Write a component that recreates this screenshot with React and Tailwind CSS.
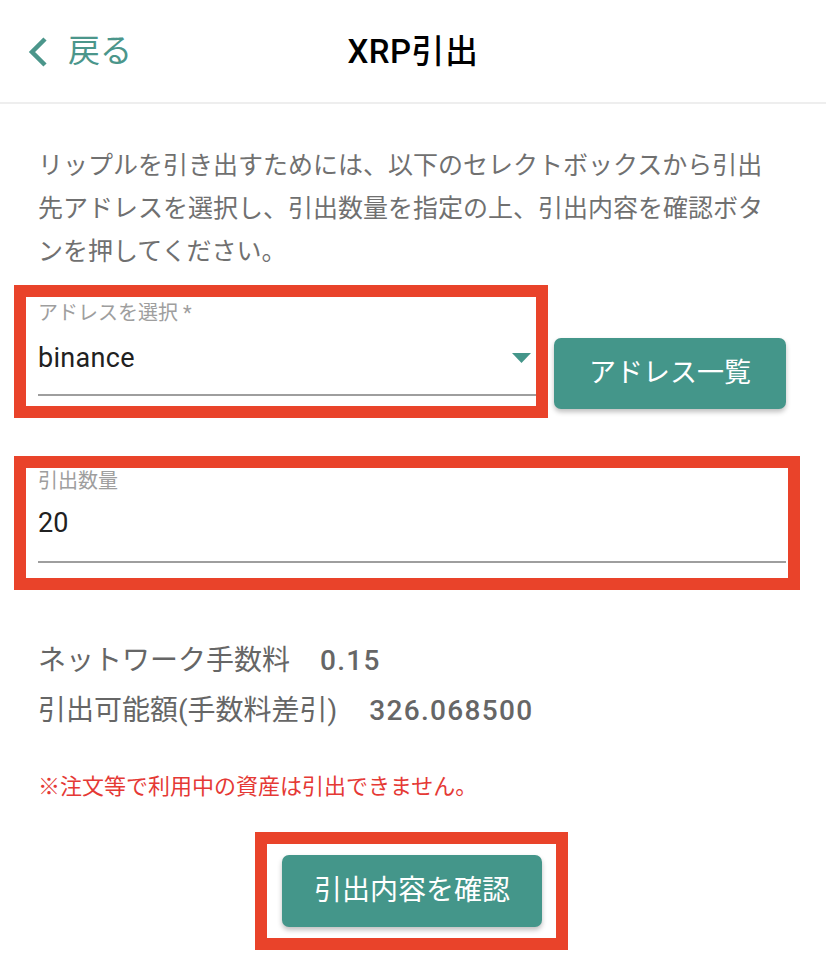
export default function App() {
  const font = "font-['Roboto','Noto_Sans_CJK_JP',sans-serif]";
  return (
    <div className={`w-[826px] min-h-[969px] bg-white ${font}`}>
      {/* Header */}
      <header className="h-[104px] border-b-2 border-[#eeeeee] grid grid-cols-[1fr_auto_1fr] items-center">
        <div className="flex items-center pl-[28px] text-[#4b968b]">
          <svg width="20" height="32" viewBox="0 0 20 32" fill="none" className="mt-[2px]">
            <polyline points="17,3 4,16 17,29" stroke="#4b968b" strokeWidth="4.5" strokeLinecap="butt" strokeLinejoin="miter" />
          </svg>
          <span className="ml-[20px] text-[32px] leading-none">戻る</span>
        </div>
        <h1 className="text-[33px] font-medium text-black leading-none tracking-[0.5px]">XRP引出</h1>
        <div />
      </header>

      <main className="pl-[14px] pr-[26px]">
        <p className="pl-[24px] pr-[14px] pt-[40px] text-[25px] leading-[43px] text-[#707070]">
          リップルを引き出すためには、以下のセレクトボックスから引出先アドレスを選択し、引出数量を指定の上、引出内容を確認ボタンを押してください。
        </p>

        {/* Address select row */}
        <div className="mt-[12px] flex items-start gap-[6px]">
          <div className="w-[534px] border-[12px] border-[#e9432a]">
            <div className="pl-[12px] pt-[4px] pb-[10px]">
              <div className="text-[20px] leading-[24px] text-[#9e9e9e]">アドレスを選択 *</div>
              <div className="mt-[16px] flex items-center justify-between pr-[5px] h-[34px]">
                <span className="text-[27px] leading-[34px] text-[#212121] tracking-[0.3px]">binance</span>
                <svg width="19" height="10" viewBox="0 0 19 10">
                  <polygon points="0,0 19,0 9.5,10" fill="#44968a" />
                </svg>
              </div>
              <div className="mt-[19px] h-[2px] bg-[#9e9e9e]" />
            </div>
          </div>
          <button className="mt-[53px] w-[232px] h-[71px] rounded-[7px] bg-[#44968a] text-white text-[27px] shadow-[0_3px_5px_rgba(0,0,0,0.25)]">
            アドレス一覧
          </button>
        </div>

        {/* Quantity */}
        <div className="mt-[38px] border-[12px] border-[#e9432a]">
          <div className="pl-[12px] pr-[2px] pt-[1px] pb-[15px]">
            <div className="text-[20px] leading-[24px] text-[#9e9e9e]">引出数量</div>
            <div className="mt-[13px] text-[27px] leading-[34px] text-[#212121]">20</div>
            <div className="mt-[21px] h-[2px] bg-[#9e9e9e]" />
          </div>
        </div>

        {/* Fees */}
        <div className="pl-[24px] mt-[46px] text-[28px] leading-[50px] text-[#666666]">
          <div>
            ネットワーク手数料<span className="ml-[30px] font-medium tracking-[1.3px]">0.15</span>
          </div>
          <div>
            引出可能額(手数料差引)<span className="ml-[32px] font-medium tracking-[1.3px]">326.068500</span>
          </div>
        </div>

        <p className="pl-[24px] mt-[36px] text-[22px] leading-[30px] text-[#e53935]">
          ※注文等で利用中の資産は引出できません。
        </p>

        <div className="mt-[30px] ml-[241px] w-[313px] border-[12px] border-[#e9432a] pl-[15px] pr-[14px] py-[11px]">
          <button className="w-[260px] h-[72px] rounded-[7px] bg-[#44968a] text-white text-[28px] shadow-[0_3px_5px_rgba(0,0,0,0.25)]">
            引出内容を確認
          </button>
        </div>
      </main>
    </div>
  );
}
